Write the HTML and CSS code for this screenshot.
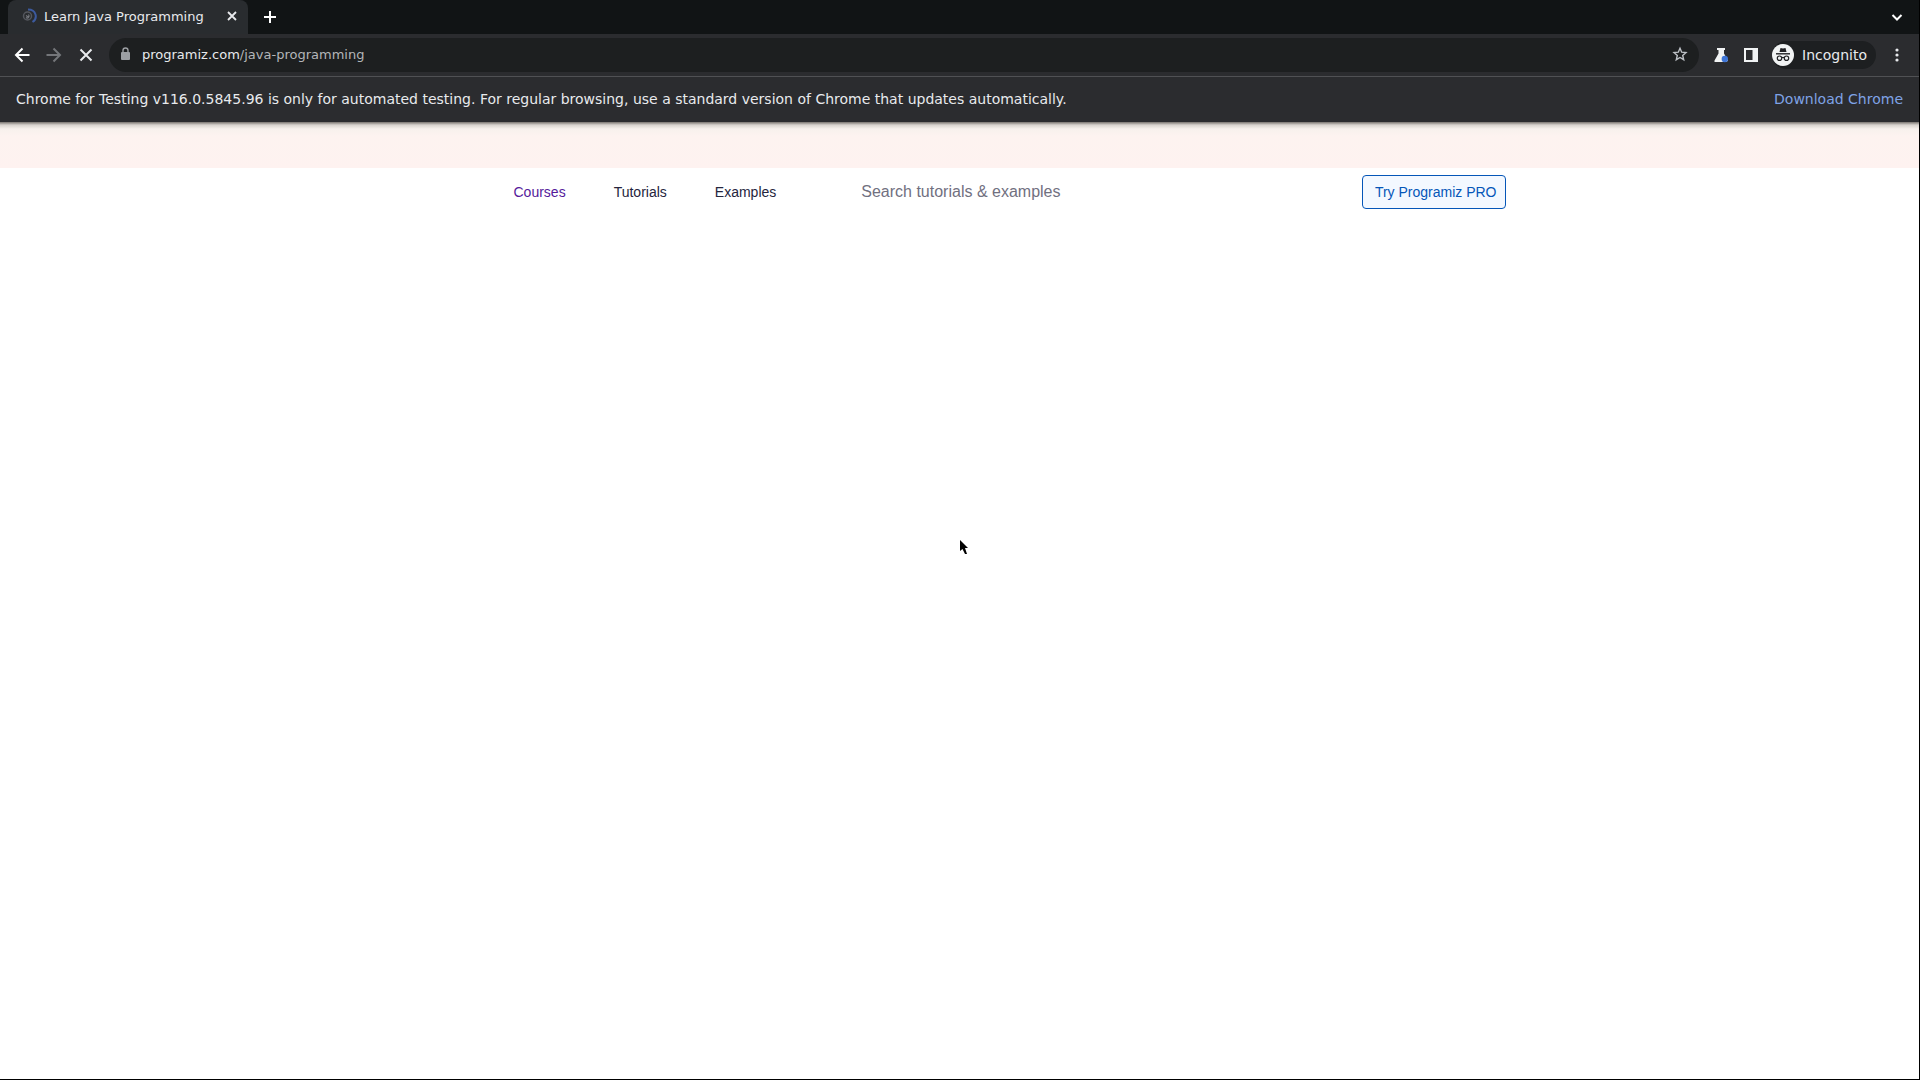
FILE: index.html
```html
<!DOCTYPE html>
<html lang="en">
<head>
    <meta charset="UTF-8">
    <meta name="viewport" content="width=device-width, initial-scale=1.0">
    <title>Learn Java Programming</title>
    <link rel="stylesheet" href="styles.css">
</head>
<body>

    <div class="tab-strip">
        <div class="tab">
            <svg class="spinner" width="16" height="16" viewBox="0 0 16 16" fill="none">
                <circle cx="5.500" cy="8" r="4" stroke="#55585e" stroke-width="1.500"/>
                <path d="M4 9.500c2 1.500 4-1 2.500-3M4 7.500l3 2" stroke="#74777d" stroke-width="1.200"/>
                <path d="M6 1.500c8.500 0 10 9 4.500 12.500" stroke="#3c5a9e" stroke-width="2"/>
            </svg>
            <span class="tab-title">Learn Java Programming</span>
            <button class="icon-btn" aria-label="Close tab">
                <svg width="16" height="16" viewBox="0 0 16 16"><path d="M4 4l8 8M12 4l-8 8" stroke="#e8eaed" stroke-width="1.800"/></svg>
            </button>
        </div>
        <button class="icon-btn new-tab" aria-label="New tab">
            <svg width="16" height="16" viewBox="0 0 16 16"><path d="M8 2v12M2 8h12" stroke="#fff" stroke-width="2"/></svg>
        </button>
        <button class="icon-btn tab-search" aria-label="Search tabs">
            <svg width="16" height="16" viewBox="0 0 16 16" fill="none"><path d="M3.500 6L8 10.500 12.500 6" stroke="#fff" stroke-width="2"/></svg>
        </button>
    </div>

    <div class="toolbar">
        <div class="history">
            <button class="icon-btn" aria-label="Back">
                <svg width="16" height="16" viewBox="0 0 16 16" fill="none"><path d="M15.500 8H2M8.500 1.500L2 8l6.500 6.500" stroke="#fff" stroke-width="2"/></svg>
            </button>
            <button class="icon-btn" aria-label="Forward" disabled>
                <svg width="16" height="16" viewBox="0 0 16 16" fill="none"><path d="M.5 8H14M7.500 1.500L14 8l-6.500 6.500" stroke="#74767a" stroke-width="2"/></svg>
            </button>
            <button class="icon-btn" aria-label="Stop loading">
                <svg width="16" height="16" viewBox="0 0 16 16"><path d="M2.500 2.500l11 11M13.500 2.500l-11 11" stroke="#e8eaed" stroke-width="2"/></svg>
            </button>
        </div>
        <div class="address-bar">
            <svg width="12" height="16" viewBox="0 0 12 16">
                <rect x="1" y="6" width="9" height="8" rx="1" fill="#9c9fa3"/>
                <path d="M3 6V4.500a2.500 2.500 0 0 1 5 0V6" fill="none" stroke="#9c9fa3" stroke-width="1.400"/>
            </svg>
            <span class="url">programiz.com<span class="path">/java-programming</span></span>
            <button class="icon-btn" aria-label="Bookmark this tab">
                <svg width="16" height="16" viewBox="0 0 16 16" fill="none"><path d="M8 2.200l1.700 4 4.300.4-3.300 2.900 1 4.200L8 11.500l-3.700 2.200 1-4.200L2 6.600l4.300-.4z" stroke="#bdc1c6" stroke-width="1.400"/></svg>
            </button>
        </div>
        <div class="actions">
            <button class="icon-btn" aria-label="Experiments">
                <svg width="16" height="16" viewBox="0 0 16 16">
                    <path d="M3 1h8v2h-1v3.500l4 7L12.500 15H.5v-1.500L4.500 6.500V3H3z" fill="#f1f3f4"/>
                    <circle cx="10.800" cy="12" r="3.200" fill="#3f76d8"/>
                </svg>
            </button>
            <button class="icon-btn" aria-label="Side panel">
                <svg width="16" height="16" viewBox="0 0 16 16"><path fill="#f1f3f4" fill-rule="evenodd" d="M1 1h14v14H1zM3 3v10h6.500V3z"/></svg>
            </button>
            <button class="incognito">
                <svg width="22" height="22" viewBox="0 0 22 22">
                    <circle cx="11" cy="11" r="11" fill="#f1f3f4"/>
                    <path d="M7.500 8l1-4 2.500.6 2.500-.6 1 4z" fill="#202124"/>
                    <path d="M4 9.800h14" stroke="#202124" stroke-width="1.400"/>
                    <g fill="none" stroke="#202124" stroke-width="1.200">
                        <circle cx="7.500" cy="14.200" r="2.200"/>
                        <circle cx="14.500" cy="14.200" r="2.200"/>
                        <path d="M9.700 13.800q1.300-.8 2.600 0"/>
                    </g>
                </svg>
                <span>Incognito</span>
            </button>
            <button class="icon-btn" aria-label="Menu">
                <svg width="16" height="16" viewBox="0 0 16 16" fill="#e8eaed"><circle cx="8" cy="3" r="1.600"/><circle cx="8" cy="8" r="1.600"/><circle cx="8" cy="13" r="1.600"/></svg>
            </button>
        </div>
    </div>

    <div class="infobar">
        <span>Chrome for Testing v116.0.5845.96 is only for automated testing. For regular browsing, use a standard version of Chrome that updates automatically.</span>
        <a href="#">Download Chrome</a>
    </div>

    <div class="page">
        <div class="banner"></div>
        <header class="site-header">
            <nav>
                <a class="active" href="#">Courses</a>
                <a href="#">Tutorials</a>
                <a href="#">Examples</a>
            </nav>
            <input class="search" type="text" aria-label="Search" placeholder="Search tutorials &amp; examples">
            <a class="pro-btn" href="#">Try Programiz PRO</a>
        </header>
    </div>

    <svg class="cursor" width="12" height="18" viewBox="0 0 12 18"><path d="M0 0v11l2.500-2 2.500 5h2L5 8h3z" fill="#000"/></svg>

</body>
</html>
```

FILE: styles.css
```css
* {
    box-sizing: border-box;
}

body {
    display: flex;
    flex-direction: column;
    min-height: 100vh;
    margin: 0;
    border-right: 1px solid #000;
    border-bottom: 1px solid #000;
    background-color: #2b2c2f;
    font-family: "DejaVu Sans", sans-serif;
    color: #e8eaed;
}

button {
    border: none;
    padding: 0;
    background: none;
    color: inherit;
    font: inherit;
    cursor: pointer;
}

a {
    text-decoration: none;
}

svg {
    display: block;
    flex: none;
}

.icon-btn {
    display: flex;
}

.tab-strip {
    display: flex;
    align-items: center;
    height: 34px;
    padding: 0 14px 0 8px;
    background-color: #111415;
}

.tab {
    display: flex;
    align-items: center;
    gap: 6px;
    width: 240px;
    height: 34px;
    padding: 0 8px 2px 14px;
    border-radius: 8px 8px 0 0;
    background-color: #292c2f;
    font-size: 13px;
}

.tab-title {
    flex: 1;
    white-space: nowrap;
}

.new-tab {
    margin-left: 14px;
}

.tab-search {
    margin-left: auto;
}

.toolbar {
    display: flex;
    align-items: center;
    gap: 15px;
    height: 43px;
    padding: 0 14px;
    border-bottom: 1px solid #505154;
}

.history {
    display: flex;
    gap: 16px;
}

.address-bar {
    display: flex;
    flex: 1;
    align-items: center;
    gap: 10px;
    height: 34px;
    padding: 0 11px 2px 11px;
    border-radius: 17px;
    background-color: #1d1f20;
    font-size: 13px;
}

.url {
    flex: 1;
}

.path {
    color: #b4b6b9;
}

.actions {
    display: flex;
    align-items: center;
    gap: 13px;
}

.incognito {
    display: flex;
    align-items: center;
    gap: 8px;
    height: 28px;
    padding-right: 9px;
    border-radius: 14px;
    background-color: #1d1f21;
    font-size: 14px;
}

.infobar {
    display: flex;
    align-items: center;
    justify-content: space-between;
    height: 45px;
    padding: 0 16px 2px;
    font-size: 14px;
}

.infobar a {
    color: #7fa3e6;
}

.page {
    flex: 1;
    background-color: #fff;
    font-family: "Liberation Sans", Arial, sans-serif;
}

.banner {
    height: 46px;
    background: linear-gradient(#77736f, #d8d3ce 3px, #f7f1ed 7px, #fdf3f0 14px, #fef2f0);
}

.site-header {
    display: flex;
    align-items: center;
    max-width: 1092px;
    height: 48px;
    margin: 0 auto;
    padding-left: 100px;
    font-size: 14px;
}

nav {
    display: flex;
    gap: 48px;
}

nav a {
    color: #25253d;
}

nav a.active {
    color: #551a9b;
}

.search {
    flex: 1;
    margin: 0 64px 0 85px;
    padding: 0;
    border: none;
    background: none;
    font-family: inherit;
    font-size: 16px;
}

.search::placeholder {
    color: #71707f;
}

.pro-btn {
    padding: 8px 8px 8px 12px;
    border: 1px solid #0556b8;
    border-radius: 4px;
    background-color: #f3f8ff;
    color: #0556b8;
}

.cursor {
    position: absolute;
    top: 540px;
    left: 960px;
}
```
